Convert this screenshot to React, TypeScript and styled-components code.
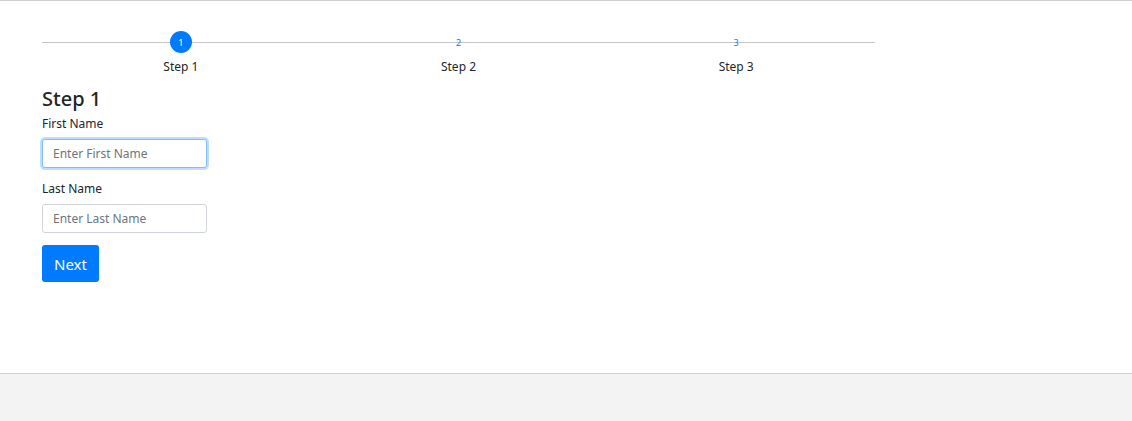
import React from 'react';
import styled, { createGlobalStyle } from 'styled-components';

const Global = createGlobalStyle`
  html, body { margin: 0; padding: 0; background: #fff; }
  body { font-family: "Noto Sans", "Open Sans", sans-serif; color: #212529; }
`;

const Page = styled.div`
  height: 421px;
  display: flex;
  flex-direction: column;
  border-top: 1px solid #d0d0d0;
  box-sizing: border-box;
`;

const Main = styled.main`
  flex: 0 0 372px;
  padding: 30px 42px 0;
  box-sizing: border-box;
`;

const Footer = styled.footer`
  flex: 1;
  background: #f3f3f3;
  border-top: 1px solid #d0d0d0;
`;

const Stepper = styled.div`
  width: 833px;
  display: grid;
  grid-template-columns: repeat(3, 1fr);
  position: relative;
  &::before {
    content: '';
    position: absolute;
    left: 0;
    right: 0;
    top: 11px;
    height: 1px;
    background: #c8c8c8;
  }
`;

const Step = styled.div`
  display: flex;
  flex-direction: column;
  align-items: center;
  position: relative;
`;

const Dot = styled.div<{ $active?: boolean }>`
  width: 22px;
  height: 22px;
  border-radius: 50%;
  display: flex;
  align-items: center;
  justify-content: center;
  font-size: 9px;
  color: ${(p) => (p.$active ? '#fff' : '#007bff')};
  background: ${(p) => (p.$active ? '#007bff' : 'transparent')};
`;

const StepLabel = styled.div`
  font-size: 12px;
  margin-top: 6px;
  line-height: 16px;
`;

const Heading = styled.h2`
  font-size: 20px;
  font-weight: 500;
  margin: 11px 0 4px;
  line-height: 26px;
`;

const Label = styled.label`
  display: block;
  font-size: 12px;
  line-height: 16px;
  margin-bottom: 7px;
`;

const Field = styled.div`
  margin-bottom: 13px;
`;

const Input = styled.input<{ $focus?: boolean }>`
  display: block;
  width: 165px;
  height: 29px;
  box-sizing: border-box;
  padding: 0 10px;
  font-family: inherit;
  font-size: 12px;
  border: 1px solid ${(p) => (p.$focus ? '#80bdff' : '#ced4da')};
  border-radius: 3px;
  box-shadow: ${(p) => (p.$focus ? '0 0 0 2px rgba(0,123,255,0.25)' : 'none')};
  outline: none;
  &::placeholder { color: #6c757d; }
`;

const Button = styled.button`
  background: #007bff;
  color: #fff;
  border: none;
  border-radius: 3px;
  width: 57px;
  height: 37px;
  font-family: inherit;
  font-size: 15px;
  margin-top: -1px;
`;

const steps = ['Step 1', 'Step 2', 'Step 3'];

export default function App() {
  return (
    <Page>
      <Global />
      <Main>
        <Stepper>
          {steps.map((s, i) => (
            <Step key={s}>
              <Dot $active={i === 0}>{i + 1}</Dot>
              <StepLabel>{s}</StepLabel>
            </Step>
          ))}
        </Stepper>
        <Heading>Step 1</Heading>
        <Field>
          <Label>First Name</Label>
          <Input $focus placeholder="Enter First Name" />
        </Field>
        <Field>
          <Label>Last Name</Label>
          <Input placeholder="Enter Last Name" />
        </Field>
        <Button>Next</Button>
      </Main>
      <Footer />
    </Page>
  );
}
